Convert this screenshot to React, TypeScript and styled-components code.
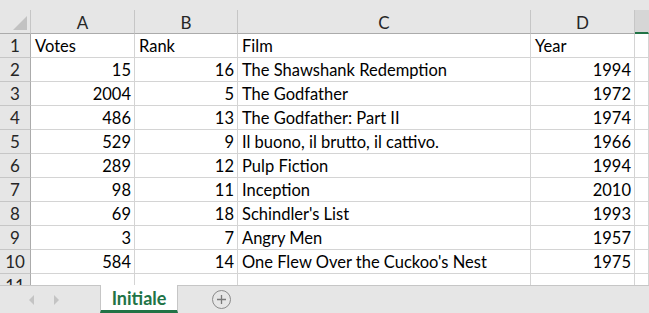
import React from "react";
import styled, { createGlobalStyle } from "styled-components";

const Global = createGlobalStyle`
  html, body { margin: 0; padding: 0; background: #ffffff; }
  body { font-family: Lato, "Open Sans", sans-serif; overflow: hidden; }
`;

const COLS = "31px 104px 103px 293px 104px 1fr";

const Page = styled.div`
  width: 649px;
  height: 313px;
  display: flex;
  flex-direction: column;
  background: #ffffff;
  overflow: hidden;
`;

const TopStrip = styled.div`
  height: 10px;
  background: #e6e6e6;
  flex: none;
`;

const Sheet = styled.div`
  flex: 1;
  overflow: hidden;
  display: grid;
  grid-template-columns: ${COLS};
  grid-auto-rows: 24px;
  align-content: start;
`;

const Corner = styled.div`
  position: relative;
  background: #e6e6e6;
  border-right: 1px solid #c6c6c6;
  border-bottom: 1px solid #ababab;
  &::after {
    content: "";
    position: absolute;
    right: 3px;
    bottom: 3px;
    width: 0;
    height: 0;
    border-left: 14px solid transparent;
    border-bottom: 14px solid #c2c2c2;
  }
`;

const ColHead = styled.div<{ $sel?: boolean }>`
  background: ${(p) => (p.$sel ? "#d6d6d6" : "#e6e6e6")};
  border-right: 1px solid ${(p) => (p.$sel ? "#d6d6d6" : "#c6c6c6")};
  border-bottom: ${(p) => (p.$sel ? "2px solid #217346" : "1px solid #ababab")};
  display: flex;
  align-items: center;
  justify-content: center;
  font-size: 17px;
  color: #262626;
  box-sizing: border-box;
  height: 24px;
  padding-top: 1px;
`;

const RowHead = styled.div`
  background: #e6e6e6;
  border-right: 1px solid #ababab;
  border-bottom: 1px solid #c6c6c6;
  display: flex;
  align-items: center;
  justify-content: center;
  font-size: 17px;
  color: #262626;
`;

const Cell = styled.div<{ $num?: boolean }>`
  border-right: 1px solid #d4d4d4;
  border-bottom: 1px solid #d4d4d4;
  display: flex;
  align-items: center;
  justify-content: ${(p) => (p.$num ? "flex-end" : "flex-start")};
  padding: 0 3px 0 4px;
  font-size: 16.5px;
  color: #000;
  white-space: nowrap;
  overflow: hidden;
`;

const TabBar = styled.div`
  flex: none;
  height: 28px;
  background: #e6e6e6;
  display: flex;
  align-items: stretch;
`;

const NavArea = styled.div`
  width: 100px;
  border-top: 1px solid #c6c6c6;
  display: flex;
  align-items: center;
  justify-content: center;
  gap: 20px;
  padding-right: 12px;
  box-sizing: border-box;
`;

const Arrow = styled.span<{ $dir: "l" | "r" }>`
  width: 0;
  height: 0;
  border-top: 5px solid transparent;
  border-bottom: 5px solid transparent;
  ${(p) =>
    p.$dir === "l"
      ? "border-right: 5px solid #c4c4c4;"
      : "border-left: 5px solid #c4c4c4;"}
`;

const Tab = styled.div`
  width: 78px;
  background: #ffffff;
  border-left: 1px solid #c6c6c6;
  border-right: 1px solid #c6c6c6;
  border-bottom: 3px solid #217346;
  box-sizing: border-box;
  display: flex;
  align-items: center;
  justify-content: center;
  font-weight: 700;
  font-size: 18px;
  color: #217346;
  padding-top: 1px;
`;

const Rest = styled.div`
  flex: 1;
  border-top: 1px solid #c6c6c6;
  display: flex;
  align-items: center;
  padding-left: 34px;
`;

const AddBtn = styled.div`
  width: 17px;
  height: 17px;
  border: 1px solid #8a8a8a;
  border-radius: 50%;
  display: flex;
  align-items: center;
  justify-content: center;
  color: #7a7a7a;
`;

const rows: [number, number, string, number][] = [
  [15, 16, "The Shawshank Redemption", 1994],
  [2004, 5, "The Godfather", 1972],
  [486, 13, "The Godfather: Part II", 1974],
  [529, 9, "Il buono, il brutto, il cattivo.", 1966],
  [289, 12, "Pulp Fiction", 1994],
  [98, 11, "Inception", 2010],
  [69, 18, "Schindler's List", 1993],
  [3, 7, "Angry Men", 1957],
  [584, 14, "One Flew Over the Cuckoo's Nest", 1975],
];

export default function App() {
  return (
    <Page>
      <Global />
      <TopStrip />
      <Sheet>
        <Corner />
        <ColHead>A</ColHead>
        <ColHead>B</ColHead>
        <ColHead>C</ColHead>
        <ColHead>D</ColHead>
        <ColHead $sel />
        <RowHead>1</RowHead>
        <Cell>Votes</Cell>
        <Cell>Rank</Cell>
        <Cell>Film</Cell>
        <Cell>Year</Cell>
        <Cell />
        {rows.map((r, i) => (
          <React.Fragment key={i}>
            <RowHead>{i + 2}</RowHead>
            <Cell $num>{r[0]}</Cell>
            <Cell $num>{r[1]}</Cell>
            <Cell>{r[2]}</Cell>
            <Cell $num>{r[3]}</Cell>
            <Cell />
          </React.Fragment>
        ))}
        <RowHead>11</RowHead>
        <Cell />
        <Cell />
        <Cell />
        <Cell />
        <Cell />
      </Sheet>
      <TabBar>
        <NavArea>
          <Arrow $dir="l" />
          <Arrow $dir="r" />
        </NavArea>
        <Tab>Initiale</Tab>
        <Rest>
          <AddBtn>
            <svg width="11" height="11" viewBox="0 0 11 11">
              <path d="M5.5 1v9M1 5.5h9" stroke="#7a7a7a" strokeWidth="1.3" />
            </svg>
          </AddBtn>
        </Rest>
      </TabBar>
    </Page>
  );
}
